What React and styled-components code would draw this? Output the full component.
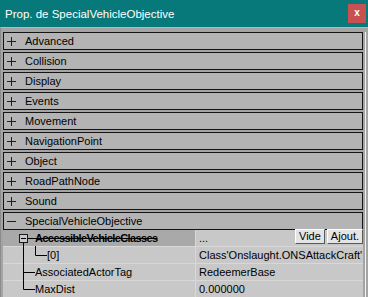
import React from "react"
import styled, { createGlobalStyle } from "styled-components"

const categories = [
  "Advanced",
  "Collision",
  "Display",
  "Events",
  "Movement",
  "NavigationPoint",
  "Object",
  "RoadPathNode",
  "Sound",
]

const props = [
  { name: "AccessibleVehicleClasses", value: "...", indent: 32, head: true },
  { name: "[0]", value: "Class'Onslaught.ONSAttackCraft'", indent: 44 },
  { name: "AssociatedActorTag", value: "RedeemerBase", indent: 32 },
  { name: "MaxDist", value: "0.000000", indent: 32 },
]

const Sign = ({ minus }) => (
  <SignIcon width="9" height="9" viewBox="0 0 9 9">
    <line x1="0" y1="4.5" x2="9" y2="4.5" stroke="#1e1e1e" />
    {!minus && <line x1="4.5" y1="0" x2="4.5" y2="9" stroke="#1e1e1e" />}
  </SignIcon>
)

const App = () => (
  <>
    <GlobalStyle />
    <Window>
      <TitleBar>
        <Title>Prop. de SpecialVehicleObjective</Title>
        <CloseButton>x</CloseButton>
      </TitleBar>
      <Body>
        <Panel>
          {categories.map((c) => (
            <Category key={c}>
              <Sign />
              {c}
            </Category>
          ))}
          <Category>
            <Sign minus />
            SpecialVehicleObjective
          </Category>
          <PropList>
            <Tree width="193" height="68">
              <rect x="16.5" y="4.5" width="8" height="8" fill="#c8c8c8" stroke="#1a1a1a" />
              <line x1="18" y1="8.5" x2="23" y2="8.5" stroke="#000" />
              <line x1="25" y1="8.5" x2="32" y2="8.5" stroke="#000" />
              <line x1="20.5" y1="13" x2="20.5" y2="59.5" stroke="#000" />
              <line x1="32.5" y1="16" x2="32.5" y2="25.5" stroke="#000" />
              <line x1="32.5" y1="25.5" x2="44" y2="25.5" stroke="#000" />
              <line x1="20.5" y1="42.5" x2="32" y2="42.5" stroke="#000" />
              <line x1="20.5" y1="59.5" x2="32" y2="59.5" stroke="#000" />
            </Tree>
            {props.map((p) => (
              <PropRow key={p.name}>
                <NameCell $head={p.head} $indent={p.indent}>
                  <Name $head={p.head}>{p.name}</Name>
                </NameCell>
                <ValueCell>
                  <span>{p.value}</span>
                  {p.head && (
                    <Buttons>
                      <SmallButton>Vide</SmallButton>
                      <SmallButton>Ajout.</SmallButton>
                    </Buttons>
                  )}
                </ValueCell>
              </PropRow>
            ))}
          </PropList>
        </Panel>
      </Body>
    </Window>
  </>
)

export default App

const GlobalStyle = createGlobalStyle`
  html, body {
    margin: 0;
    padding: 0;
    background: #a0a0a0;
    overflow: hidden;
  }
  * {
    box-sizing: border-box;
  }
`

const Window = styled.div`
  width: 368px;
  height: 297px;
  display: flex;
  flex-direction: column;
  background: #a8a8a8;
  font-family: "Liberation Sans", Arial, sans-serif;
  overflow: hidden;
`

const TitleBar = styled.div`
  height: 27px;
  flex-shrink: 0;
  background: #07797a;
  display: flex;
  align-items: center;
  justify-content: space-between;
  padding: 0 2px 0 5px;
`

const Title = styled.span`
  color: #fff;
  font-size: 11.5px;
  margin-top: 1px;
`

const CloseButton = styled.div`
  width: 18px;
  height: 19px;
  background: #c75050;
  color: #fff;
  font-weight: bold;
  font-size: 10px;
  display: flex;
  align-items: center;
  justify-content: center;
  line-height: 1;
  padding-bottom: 2px;
`

const Body = styled.div`
  flex: 1;
  padding: 4px 2px 0 3px;
  border-top: 1px solid #b8b8b8;
  background: #a4a4a4;
  border-left: 1px solid #8c8c8c;
  display: flex;
`

const Panel = styled.div`
  flex: 1;
  margin-left: -1px;
  padding-right: 2px;
  border-right: 1px solid #f2f2f2;
  display: flex;
  flex-direction: column;
  gap: 2px;
`

const Category = styled.div`
  height: 18px;
  flex-shrink: 0;
  border: 1px solid #141414;
  background: #b4b4b4;
  display: flex;
  align-items: center;
  font-size: 11px;
  color: #000;
`

const SignIcon = styled.svg`
  margin: 0 9px 0 3px;
  flex-shrink: 0;
`

const PropList = styled.div`
  position: relative;
  margin-top: -2px;
  display: flex;
  flex-direction: column;
`

const Tree = styled.svg`
  position: absolute;
  left: 0;
  top: 0;
  pointer-events: none;
`

const PropRow = styled.div`
  height: 17px;
  flex-shrink: 0;
  display: grid;
  grid-template-columns: 193px 1fr;
  border-bottom: 1px solid #d8d8d8;
  font-size: 11px;
  color: #000;
`

const NameCell = styled.div`
  background: ${(p) => (p.$head ? "#a9a9a9" : "#c8c8c8")};
  padding-left: ${(p) => p.$indent}px;
  border-right: 1px solid #d8d8d8;
  display: flex;
  align-items: center;
`

const Name = styled.span`
  font-weight: ${(p) => (p.$head ? "bold" : "normal")};
  letter-spacing: ${(p) => (p.$head ? "-0.6px" : "0")};
  text-decoration: ${(p) => (p.$head ? "line-through" : "none")};
`

const ValueCell = styled.div`
  background: #c8c8c8;
  padding-left: 3px;
  display: flex;
  align-items: center;
  justify-content: space-between;
  white-space: nowrap;
`

const Buttons = styled.div`
  display: flex;
  gap: 2px;
  align-self: flex-start;
  margin-top: -1px;
`

const SmallButton = styled.div`
  height: 15px;
  padding: 0 3px;
  background: #e4e4e4;
  border: 1px solid;
  border-color: #fff #5a5a5a #5a5a5a #fff;
  font-size: 11px;
  line-height: 13px;
  color: #000;
`
